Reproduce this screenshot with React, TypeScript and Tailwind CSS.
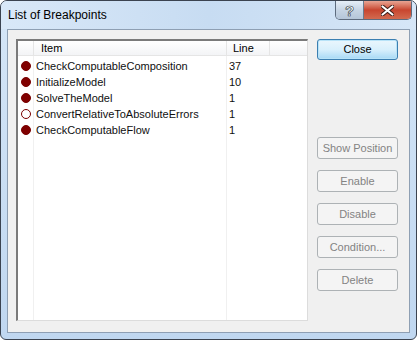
const rows = [
  { name: "CheckComputableComposition", line: "37", on: true },
  { name: "InitializeModel", line: "10", on: true },
  { name: "SolveTheModel", line: "1", on: true },
  { name: "ConvertRelativeToAbsoluteErrors", line: "1", on: false },
  { name: "CheckComputableFlow", line: "1", on: true },
];

const sideButtons = ["Show Position", "Enable", "Disable", "Condition...", "Delete"];

function Bullet({ on }: { on: boolean }) {
  return (
    <span
      className={`block size-[10px] rounded-full border border-[#7a0000] ${
        on ? "bg-[#800000]" : "bg-white"
      }`}
    />
  );
}

export default function App() {
  return (
    <div
      className="flex h-[340px] w-[417px] flex-col overflow-hidden rounded-t-[7px] rounded-b-[6px] border border-[#3b4350] bg-gradient-to-b from-[#d5e6f7] to-[#c0d7f0] text-[11px] text-black"
      style={{ fontFamily: '"Liberation Sans", Arial, sans-serif' }}
    >
      {/* title bar */}
      <div className="flex h-[28px] shrink-0 items-start bg-gradient-to-r from-[#d9e8f8] via-[#c7dcf2] to-[#d6e6f7]">
        <div className="pl-[7px] pt-[6px] text-[12px] leading-[16px]">List of Breakpoints</div>
        <div className="ml-auto mr-[4px] flex h-[19px] overflow-hidden rounded-b-[5px] border border-t-0 border-[#5d6b7e]">
          <div className="flex w-[28px] items-center justify-center border-r border-[#6c7a8c] bg-gradient-to-b from-[#e6eef7] via-[#c6d4e4] to-[#b5c6d9] text-[15px] font-bold leading-none text-white [-webkit-text-stroke:0.6px_#2c3440]">
            ?
          </div>
          <div className="flex w-[47px] items-center justify-center bg-gradient-to-b from-[#e8a493] via-[#c8452f] to-[#d26a4f]">
            <svg width="13" height="11" viewBox="0 0 13 11">
              <path
                d="M1.5 1.5 L11.5 9.5 M11.5 1.5 L1.5 9.5"
                stroke="#3b1b16"
                strokeWidth="4"
                strokeLinecap="round"
              />
              <path
                d="M1.5 1.5 L11.5 9.5 M11.5 1.5 L1.5 9.5"
                stroke="#ffffff"
                strokeWidth="2.2"
                strokeLinecap="round"
              />
            </svg>
          </div>
        </div>
      </div>

      {/* client area */}
      <div className="mx-[6px] mb-[6px] flex flex-1 border border-[#8e9fb3] bg-[#f0f0f0] pl-[8px] pt-[9px] pb-[11px] pr-[11px]">
        {/* list view */}
        <div className="flex h-[282px] w-[292px] flex-col border-l-2 border-t-2 border-b border-r border-l-[#7a7a7a] border-t-[#7a7a7a] border-b-[#dcdcdc] border-r-[#dcdcdc] bg-white">
          <div className="flex h-[15px] shrink-0 border-b border-[#e5e5e5] bg-gradient-to-b from-white to-[#f3f4f6] leading-[14px]">
            <div className="w-[16px] border-r border-[#e5e5e5]" />
            <div className="w-[193px] border-r border-[#e5e5e5] pl-[7px]">Item</div>
            <div className="w-[43px] border-r border-[#e5e5e5] pl-[6px]">Line</div>
            <div className="flex-1" />
          </div>
          <div className="flex flex-1">
            <div className="w-[16px] border-r border-[#f0f0f0] pt-[2px]">
              {rows.map((r) => (
                <div key={r.name} className="flex h-[16px] items-center pl-[3px]">
                  <Bullet on={r.on} />
                </div>
              ))}
            </div>
            <div className="w-[193px] border-r border-[#f0f0f0] pt-[2px] pl-[2px]">
              {rows.map((r) => (
                <div key={r.name} className="h-[16px] leading-[16px] text-[#101010]">
                  {r.name}
                </div>
              ))}
            </div>
            <div className="w-[43px] pt-[2px] pl-[2px]">
              {rows.map((r) => (
                <div key={r.name} className="h-[16px] leading-[16px] text-[#101010]">
                  {r.line}
                </div>
              ))}
            </div>
          </div>
        </div>

        {/* buttons */}
        <div className="ml-[9px] flex w-[81px] flex-col">
          <button className="h-[21px] w-[81px] rounded-[3px] border border-[#3c7fb1] bg-gradient-to-b from-[#eaf6fd] via-[#d9f0fc] to-[#a7d9f5] text-[11px] leading-none shadow-[inset_0_0_0_1px_#b8e3f8]">
            Close
          </button>
          <div className="mt-[77px] flex flex-col gap-[11px]">
            {sideButtons.map((b) => (
              <button
                key={b}
                className="h-[22px] w-[81px] rounded-[3px] border border-[#adb2b5] bg-[#f4f4f4] text-[11px] leading-none text-[#838383]"
              >
                {b}
              </button>
            ))}
          </div>
        </div>
      </div>
    </div>
  );
}
